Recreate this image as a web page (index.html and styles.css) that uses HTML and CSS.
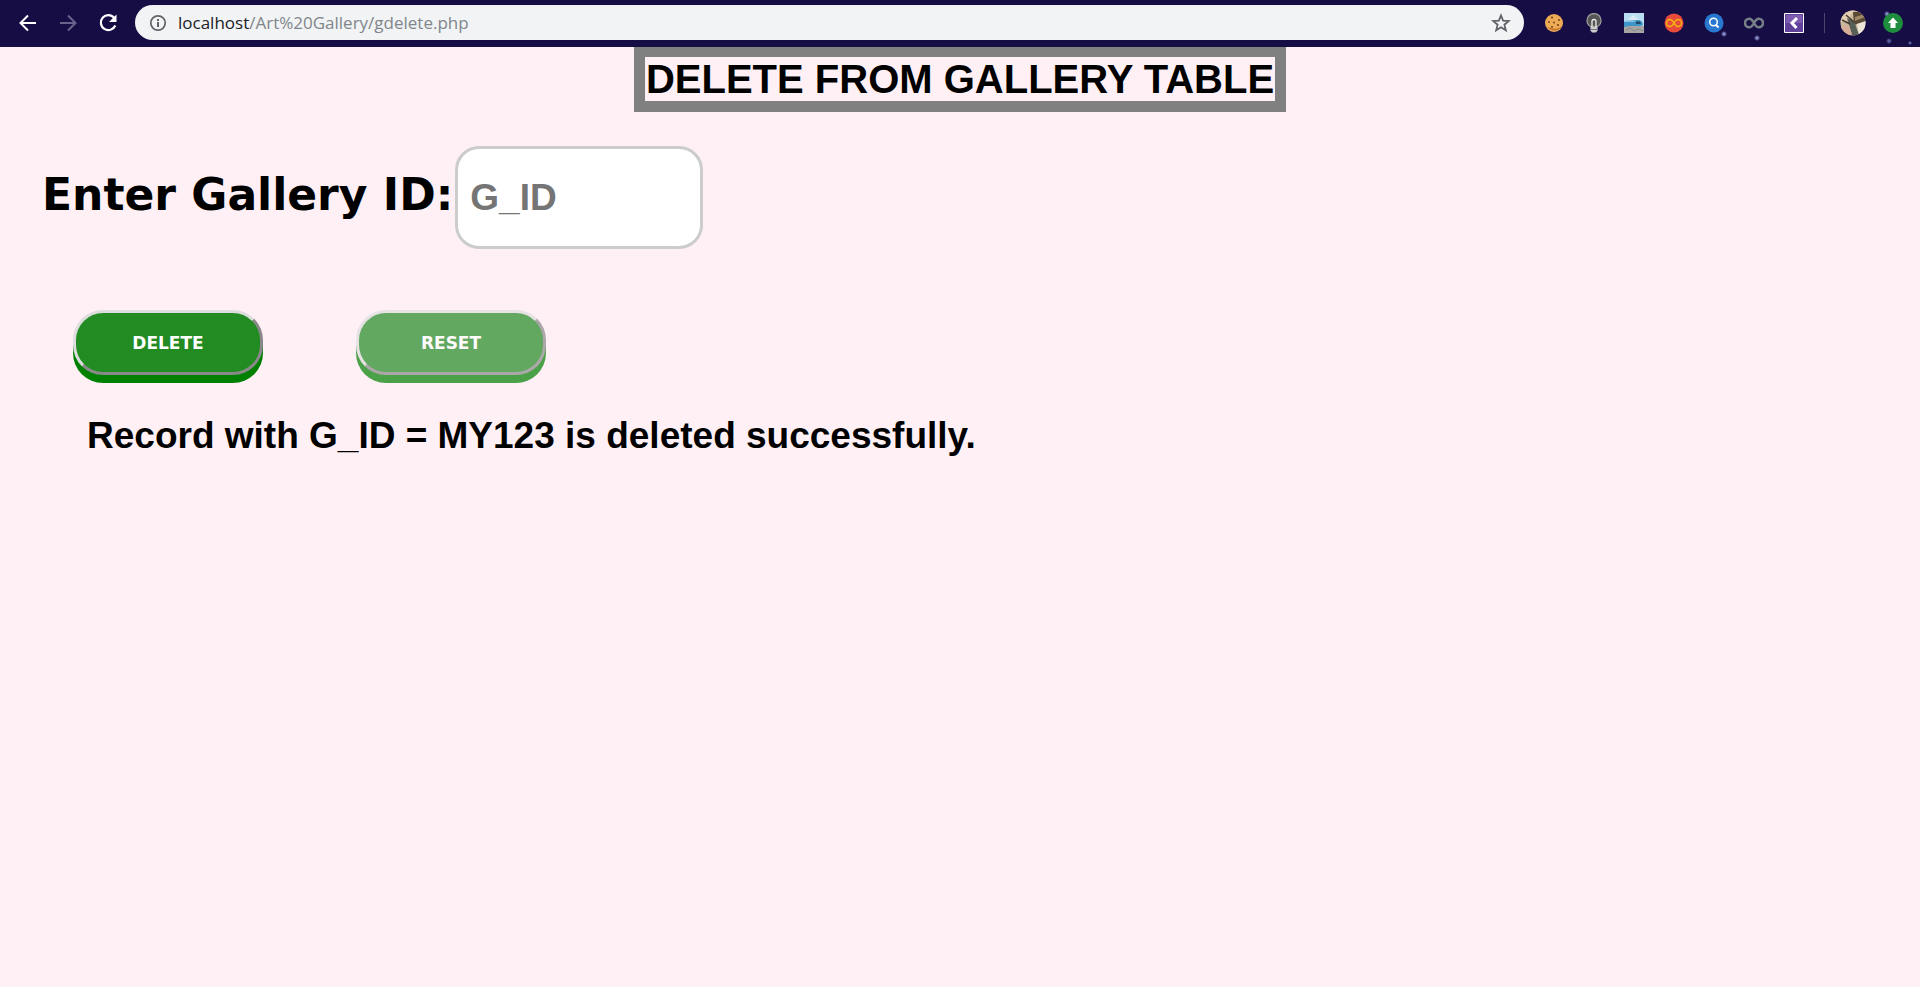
FILE: index.html
```html
<!DOCTYPE html>
<html lang="en">
<head>
<meta charset="utf-8">
<title>Delete from gallery table</title>
<link rel="stylesheet" href="styles.css">
</head>
<body>
<header class="toolbar">
  <nav class="nav">
    <button class="tool" type="button" aria-label="Back"><svg width="24" height="24" viewBox="0 0 24 24" fill="none" stroke="#fff" stroke-width="2"><path d="M20 12H5M12 4.500L4.500 12L12 19.500"/></svg></button>
    <button class="tool" type="button" aria-label="Forward"><svg width="24" height="24" viewBox="0 0 24 24" fill="none" stroke="#6a638b" stroke-width="2"><path d="M4 12h15M12 4.500L19.500 12L12 19.500"/></svg></button>
    <button class="tool" type="button" aria-label="Reload"><svg width="24" height="24" viewBox="0 0 24 24"><path d="M18.300 7A7.500 7.500 0 1 0 19.300 14.500" fill="none" stroke="#fff" stroke-width="2.200"/><path d="M20.500 3.500V11H13z" fill="#fff"/></svg></button>
  </nav>
  <div class="address">
    <svg width="18" height="18" viewBox="0 0 18 18"><circle cx="9" cy="9" r="7.200" fill="none" stroke="#5f6368" stroke-width="1.700"/><path d="M8 8h2v5H8zM8 5h2v2H8z" fill="#5f6368"/></svg>
    <span class="url"><span class="host">localhost</span>/Art%20Gallery/gdelete.php</span>
    <svg width="20" height="20" viewBox="0 0 20 20" fill="none" stroke="#5f6368" stroke-width="1.800"><path d="M10 2.500l2.100 5.200 5.600.4-4.300 3.600 1.400 5.500-4.800-3-4.800 3 1.400-5.500L2.300 8.100l5.600-.4z"/></svg>
  </div>
  <div class="extensions">
    <svg width="20" height="20" viewBox="0 0 20 20"><circle cx="10" cy="10" r="9" fill="#edab55"/><path d="M3 14a9 9 0 0 0 15-1q-5 5-15 1" fill="#c4762f"/><g fill="#7a4520"><circle cx="8" cy="4.500" r="1.100"/><circle cx="5" cy="9" r="1"/><circle cx="10" cy="9.500" r="1"/><circle cx="15" cy="7" r="1"/><circle cx="14" cy="12" r="1.100"/><circle cx="8" cy="14" r="1"/></g></svg>
    <svg width="20" height="20" viewBox="0 0 20 20"><path d="M6.500 13.500C4 12 3 10 3 7.500a7 7 0 0 1 14 0c0 2.500-1 4.500-3.500 6z" fill="#555" stroke="#999" stroke-width="1.300"/><path d="M8 14V8.500a2 2 0 0 1 4 0V14" fill="none" stroke="#eee" stroke-width="1.300"/><path d="M6.500 14h7v3.500l-1.500 2H8l-1.500-2z" fill="#ccc"/><path d="M7 16.500h6" stroke="#777"/></svg>
    <svg width="20" height="20" viewBox="0 0 20 20"><path d="M0 0h20v20H0z" fill="#b9ddf1"/><path d="M4 7l5-5 6 5z" fill="#dcebf3"/><path d="M0 8l15-1q4 1 4 5l-5 2H0z" fill="#3f94c8"/><path d="M0 8.500h11" stroke="#83c4e6"/><path d="M12 8.500h4l1 2.500h-5z" fill="#244a63"/><path d="M0 14l6-1 14 0v7H0z" fill="#a7a6a5"/><path d="M2 17l4-2 4 3 5-2 4 2" fill="none" stroke="#898585"/></svg>
    <svg width="20" height="20" viewBox="0 0 20 20"><circle cx="10" cy="10" r="9.500" fill="#e84b3c"/><path d="M10 10C8.500 7.300 7.500 6.500 6 6.500a3.500 3.500 0 0 0 0 7C7.500 13.500 8.500 12.700 10 10s2.500-3.500 4-3.500a3.500 3.500 0 0 1 0 7C12.500 13.500 11.500 12.700 10 10z" fill="none" stroke="#f3b311" stroke-width="1.500"/></svg>
    <svg width="20" height="20" viewBox="0 0 20 20"><circle cx="10" cy="10" r="9.500" fill="#2878cf"/><circle cx="9.500" cy="9" r="3.800" fill="none" stroke="#fff" stroke-width="1.500"/><path d="M12 12l2.500 2.500" stroke="#fff" stroke-width="1.800"/></svg>
    <svg width="20" height="20" viewBox="0 0 20 20"><path d="M10 10C8 6.300 6.500 5.700 5.300 5.700a4.300 4.300 0 0 0 0 8.600c1.200 0 2.700-.6 4.700-4.300s3.500-4.300 4.700-4.300a4.300 4.300 0 0 1 0 8.600c-1.200 0-2.700-.6-4.700-4.300z" fill="none" stroke="#768087" stroke-width="2.500"/></svg>
    <svg width="20" height="20" viewBox="0 0 20 20"><path d="M.5.500h19v19H.5z" fill="#61429b" stroke="#fff"/><path d="M2 2h16v8H2z" fill="#7c5bb0"/><path d="M13 5l-5 5 4.500 5" fill="none" stroke="#fff" stroke-width="3"/></svg>
  </div>
  <div class="account">
    <svg width="26" height="26" viewBox="0 0 26 26"><clipPath id="avatar"><circle cx="13" cy="13" r="12.500"/></clipPath><g clip-path="url(#avatar)"><path d="M0 0h26v26H0z" fill="#c9b79c"/><path d="M0 0h15L6 12H0z" fill="#e2cdb0"/><path d="M13 2l13 0v9l-12 4z" fill="#5b4a35"/><path d="M15 7l10-3v3L15 11z" fill="#a08b68"/><path d="M7 8l7 3 5 14h-7z" fill="#566056"/><path d="M2 10l8 4M6 5l8 7" stroke="#453a2f" stroke-width="1.500"/><path d="M17 14l9-3v12l-7 2z" fill="#eee5d9"/><path d="M0 17l9-2 3 10H3z" fill="#d6ad98"/></g></svg>
    <svg width="20" height="20" viewBox="0 0 20 20"><circle cx="10" cy="10" r="10" fill="#1e8e3e"/><path d="M10 4.500l5 5.500h-2.500v5h-5v-5H5z" fill="#fff"/></svg>
  </div>
</header>
<main>
  <h1 class="title">DELETE FROM GALLERY TABLE</h1>
  <form class="form" onsubmit="return false">
    <div class="field">
      <label class="label" for="gid">Enter Gallery ID:</label>
      <input class="input" id="gid" type="text" placeholder="G_ID">
    </div>
    <div class="actions">
      <button class="button" type="submit">DELETE</button>
      <button class="button button-reset" type="reset">RESET</button>
    </div>
  </form>
  <p class="message">Record with G_ID = MY123 is deleted successfully.</p>
</main>
</body>
</html>
```
FILE: styles.css
```css
* { box-sizing: border-box; }
body {
  margin: 0;
  min-height: 100vh;
  background: #fff0f5;
  color: #000;
  font-family: Arial, "Liberation Sans", sans-serif;
}
svg { display: block; flex: none; }
.toolbar {
  position: relative;
  z-index: 1;
  display: flex;
  align-items: center;
  height: 47px;
  padding: 0 17px 2px 16px;
  background:
    radial-gradient(circle at 1724px 34px, #8589c8 1px, transparent 3px),
    radial-gradient(circle at 1757px 38px, #8589c8 1px, transparent 3px),
    radial-gradient(circle at 1887px 14px, #8589c8 1px, transparent 3px),
    radial-gradient(circle at 1889px 41px, #5a5c9c 1px, transparent 3px),
    radial-gradient(circle at 1910px 43px, #5a5c9c 1px, transparent 2px),
    #170d45;
}
.nav { display: flex; gap: 16px; width: 119px; }
.tool { padding: 0; border: 0; background: none; }
.address {
  display: flex;
  flex: 1;
  align-items: center;
  gap: 11px;
  height: 35px;
  padding: 0 13px 0 14px;
  border-radius: 18px;
  background: #f1f3f4;
}
.url {
  flex: 1;
  color: #80868b;
  font: 400 17px "Open Sans", sans-serif;
}
.host { color: #202124; }
.extensions { display: flex; gap: 20px; padding: 0 20px; }
.account {
  display: flex;
  align-items: center;
  gap: 17px;
  padding-left: 15px;
  border-left: 1px solid #4a436c;
  height: 20px;
}
.title {
  width: fit-content;
  margin: -1px auto 34px;
  padding: 0 1px;
  border: 11px solid #808080;
  font-size: 40px;
  line-height: 44px;
}
.field { display: flex; align-items: center; gap: 2px; padding-left: 42px; }
.label {
  padding-bottom: 6px;
  font: bold 44px Verdana, "DejaVu Sans", sans-serif;
}
.input {
  width: 248px;
  height: 103px;
  padding: 0 12px;
  border: 3px solid #ccc;
  border-radius: 24px;
  background: #fff;
  font: bold 37px Arial, "Liberation Sans", sans-serif;
}
.input::placeholder { color: #757575; opacity: 1; }
.actions { display: flex; gap: 93px; padding: 61px 73px 0; }
.button {
  width: 190px;
  height: 65px;
  padding-top: 2px;
  border: 3px outset #ddd;
  border-radius: 30px;
  background: #228b22;
  box-shadow: 0 8px #008000;
  color: #fff;
  font: bold 17px Verdana, "DejaVu Sans", sans-serif;
}
.button-reset { opacity: 0.7; }
.message {
  margin: 39px 87px 0;
  font-size: 37px;
  font-weight: bold;
  line-height: 44px;
}
```
